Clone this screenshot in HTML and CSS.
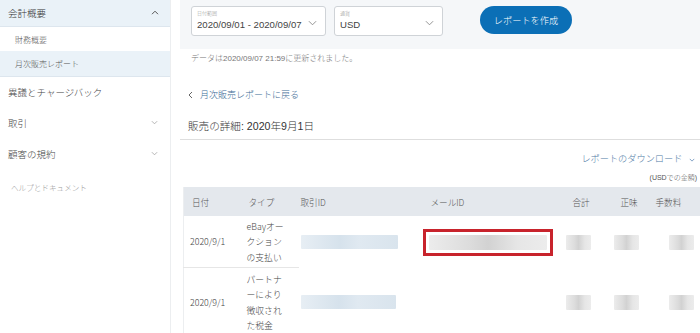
FILE: index.html
```html
<!DOCTYPE html>
<html lang="ja">
<head>
<meta charset="utf-8">
<link rel="stylesheet" href="styles.css">
</head>
<body>
<div class="page">
  <aside class="sidebar">
    <div class="nav-head"><span>会計概要</span><svg class="chev" viewBox="0 0 8 5" width="8" height="5"><path d="M1 4.2 L4 1.2 L7 4.2" fill="none" stroke="#555" stroke-width="1"/></svg></div>
    <div class="nav-sub">財務概要</div>
    <div class="nav-sub active">月次販売レポート</div>
    <div class="nav-item"><span>異議とチャージバック</span></div>
    <div class="nav-item"><span>取引</span><svg class="chev" viewBox="0 0 8 5" width="7" height="5"><path d="M1 1 L4 4 L7 1" fill="none" stroke="#aaa" stroke-width="1"/></svg></div>
    <div class="nav-item"><span>顧客の規約</span><svg class="chev" viewBox="0 0 8 5" width="7" height="5"><path d="M1 1 L4 4 L7 1" fill="none" stroke="#aaa" stroke-width="1"/></svg></div>
    <div class="nav-help">ヘルプとドキュメント</div>
  </aside>
  <main class="main">
    <div class="filters">
      <div class="select date">
        <div class="sel-label">日付範囲</div>
        <div class="sel-value">2020/09/01 - 2020/09/07</div>
        <svg class="sel-chev" viewBox="0 0 10 6" width="9" height="6"><path d="M1 1 L5 5 L9 1" fill="none" stroke="#888" stroke-width="1"/></svg>
      </div>
      <div class="select cur">
        <div class="sel-label">通貨</div>
        <div class="sel-value">USD</div>
        <svg class="sel-chev" viewBox="0 0 10 6" width="9" height="6"><path d="M1 1 L5 5 L9 1" fill="none" stroke="#888" stroke-width="1"/></svg>
      </div>
      <button class="btn">レポートを作成</button>
    </div>
    <div class="updated">データは2020/09/07 21:59に更新されました。</div>
    <div class="back"><svg class="lt" viewBox="0 0 5 8" width="5" height="8"><path d="M4 1 L1 4 L4 7" fill="none" stroke="#666" stroke-width="1"/></svg>月次販売レポートに戻る</div>
    <h1 class="title">販売の詳細: 2020年9月1日</h1>
    <div class="download">レポートのダウンロード <svg viewBox="0 0 8 5" width="6" height="4"><path d="M1 1 L4 4 L7 1" fill="none" stroke="#5b86b3" stroke-width="1"/></svg></div>
    <div class="unit">(USDでの金額)</div>
    <table class="tbl">
      <colgroup>
        <col style="width:57px"><col style="width:58px"><col style="width:122px"><col style="width:135px"><col style="width:50px"><col style="width:45px"><col style="width:50px">
      </colgroup>
      <thead>
        <tr><th>日付</th><th>タイプ</th><th class="tx">取引ID</th><th class="mail">メールID</th><th class="num">合計</th><th class="num2">正味</th><th class="num3">手数料</th></tr>
      </thead>
      <tbody>
        <tr class="r1">
          <td class="d bl">2020/9/1</td>
          <td class="t bl"><span class="ln">eBayオー</span><span class="ln">クション</span><span class="ln">の支払い</span></td>
          <td class="tx"><div class="blur blue w97"></div></td>
          <td class="mail"><div class="redbox"><div class="blur grey"></div></div></td>
          <td class="num"><div class="blur grey sm"></div></td>
          <td class="num2"><div class="blur grey sm"></div></td>
          <td class="num3"><div class="blur grey sm"></div></td>
        </tr>
        <tr class="r2">
          <td class="d">2020/9/1</td>
          <td class="t"><span class="ln">パートナ</span><span class="ln">ーにより</span><span class="ln">徴収され</span><span class="ln">た税金</span></td>
          <td class="tx"><div class="blur blue w95"></div></td>
          <td class="mail"></td>
          <td class="num"><div class="blur grey sm"></div></td>
          <td class="num2"><div class="blur grey sm"></div></td>
          <td class="num3"><div class="blur grey sm"></div></td>
        </tr>
      </tbody>
    </table>
  </main>
</div>
</body>
</html>
```
FILE: styles.css
```css
* { box-sizing: border-box; }
html, body { margin: 0; padding: 0; background: #fff; }
body {
  font-family: "Liberation Sans", "Noto Sans CJK JP", sans-serif;
  font-weight: 300;
  color: #333;
  width: 700px;
  height: 333px;
  overflow: hidden;
}
.page { display: flex; height: 333px; }

.sidebar {
  width: 171px;
  flex: none;
  border-right: 1px solid #eceef0;
  background: #fff;
}
.nav-head {
  height: 27px;
  background: #eaf2f8;
  border-bottom: 1px solid #dde6ee;
  display: flex;
  align-items: center;
  justify-content: space-between;
  padding: 0 11px 0 8px;
  font-size: 9.5px;
  color: #333;
}
.nav-head .chev { margin-top: -1px; }
.nav-sub {
  height: 24px;
  display: flex;
  align-items: center;
  padding-left: 15px;
  font-size: 8px;
  color: #555;
}
.nav-sub.active {
  height: 26px;
  background: #eaf2f8;
  border-bottom: 1px solid #dde6ee;
}
.nav-item {
  height: 31px;
  display: flex;
  align-items: center;
  justify-content: space-between;
  padding: 0 12px 2px 8px;
  font-size: 9.5px;
  color: #444;
}
.nav-help {
  margin-top: 14px;
  padding-left: 11px;
  font-size: 7.6px;
  line-height: 10px;
  color: #999;
}

.main {
  flex: 1;
  min-width: 0;
  padding-left: 9px;
}
.filters {
  height: 49px;
  background: #f5f7f9;
  display: flex;
  align-items: flex-start;
  padding: 6px 0 0 11px;
}
.select {
  position: relative;
  height: 30px;
  background: #fff;
  border: 1px solid #cfd3d7;
  border-radius: 3px;
  padding: 3px 0 0 5px;
}
.select.date { width: 135px; }
.select.cur { width: 109px; margin-left: 8px; }
.sel-label { font-size: 5px; color: #999; line-height: 6px; }
.sel-value { font-size: 9.6px; color: #444; line-height: 14px; margin-top: 2px; }
.sel-chev { position: absolute; right: 8px; top: 13px; }
.btn {
  margin-left: 37px;
  height: 28px;
  width: 92px;
  border: none;
  border-radius: 14px;
  background: #0b6fb6;
  color: #fff;
  font-family: inherit;
  font-weight: 300;
  font-size: 9.2px;
  padding: 0 0 1px 0;
}
.updated {
  margin-top: 4px;
  padding-left: 11px;
  font-size: 8px;
  color: #777;
  line-height: 12px;
}
.back {
  margin-top: 24px;
  padding-left: 8px;
  font-size: 9px;
  color: #3d6c96;
  line-height: 12px;
  display: flex;
  align-items: center;
}
.back .lt { margin-right: 7px; }
.title {
  margin: 15px 0 0 0;
  padding: 0 0 2px 8px;
  height: 24px;
  font-size: 10.6px;
  font-weight: 300;
  color: #333;
  line-height: 20px;
  border-bottom: 1px solid #dedede;
}
.download {
  margin-top: 12px;
  text-align: right;
  padding-right: 5px;
  font-size: 9.2px;
  color: #4f7ba6;
  line-height: 14px;
}
.download svg { margin-left: 4px; vertical-align: middle; }
.unit {
  margin-top: 7px;
  text-align: right;
  padding-right: 3px;
  font-size: 7px;
  color: #555;
  line-height: 10px;
}
.tbl {
  margin-top: 4px;
  margin-left: 3px;
  border-collapse: collapse;
  table-layout: fixed;
  width: 517px;
  border-left: 1px solid #eceef0;
  font-family: "Noto Sans CJK JP", "Liberation Sans", sans-serif;
}
.tbl th {
  height: 29px;
  background: #e4e8ed;
  font-weight: 300;
  font-size: 8.6px;
  color: #555;
  text-align: left;
  padding: 0 0 0 8px;
  white-space: nowrap;
}
.tbl th.tx { padding-left: 2px; }
.tbl th.mail { padding-left: 10px; }
.tbl th.num { padding-left: 17px; }
.tbl th.num2 { padding-left: 15px; }
.tbl th.num3 { padding-left: 5px; }
.tbl td {
  font-size: 8.8px;
  color: #444;
  vertical-align: middle;
  padding: 0 0 0 6px;
  line-height: 15.5px;
}
.tbl td .ln { display: block; white-space: nowrap; }
.tbl td.tx { padding-left: 2px; }
.tbl td.t { padding-left: 6px; }
.tbl td.mail { padding-left: 2px; }
.tbl td.bl { border-bottom: 1px solid #e6e6e6; }
.tbl td.num { padding-left: 10px; }
.tbl td.num2 { padding-left: 8px; }
.tbl td.num3 { padding-left: 18px; }
.r1 td { height: 51px; padding-top: 1px; }
.r2 td { height: 66px; padding-top: 4px; }
.blur { height: 14px; border-radius: 1px; }
.blur.blue { background: linear-gradient(90deg, #e7eef4, #d6e2ec 40%, #e0e9f1 60%, #d9e4ed); }
.blur.w97 { width: 97px; }
.blur.w95 { width: 95px; }
.blur.grey { background: linear-gradient(90deg, #ececec, #dcdcdc 35%, #d2d2d2 50%, #e6e6e6 75%, #ececec); }
.blur.sm { width: 25px; height: 15px; }
.redbox {
  width: 130px;
  height: 27px;
  border: 3px solid #c8232c;
  padding: 3px;
}
.redbox .blur { height: 15px; }
```
